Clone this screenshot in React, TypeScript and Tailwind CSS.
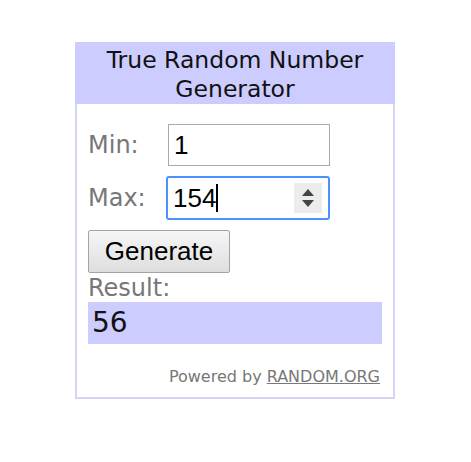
export default function App() {
  return (
    <div className="w-[471px] h-[462px] bg-white pt-[42px] pl-[75px]">
      <div className="w-[320px] h-[357px] border-2 border-[#d4d4f7] flex flex-col font-['DejaVu_Sans',sans-serif]">
        <div className="bg-[#ccccff] -mx-[2px] -mt-[2px] h-[62px] pt-[3px] flex items-center justify-center text-center text-[23.5px] leading-[29px] text-[#111]">
          True Random Number
          <br />
          Generator
        </div>
        <div className="px-[11px] pt-[20px]">
          <div className="flex items-center h-[42px]">
            <span className="w-[80px] text-[24px] text-[#777]">Min:</span>
            <div className="w-[162px] h-[42px] border border-[#aaa] flex items-center pl-[5px] text-[26px] text-black font-['Liberation_Sans',sans-serif]">
              1
            </div>
          </div>
          <div className="flex items-center h-[44px] mt-[10px]">
            <span className="w-[78px] text-[24px] text-[#777]">Max:</span>
            <div className="w-[164px] h-[44px] border-2 border-[#4d90fe] rounded-[3px] flex items-center pl-[5px] pr-[6px] text-[26px] text-black font-['Liberation_Sans',sans-serif]">
              <span>154</span>
              <span className="w-[2px] h-[28px] bg-black" />
              <div className="ml-auto w-[28px] h-[30px] bg-[#ececec] flex flex-col items-center justify-center gap-[4px]">
                <svg width="12" height="7" viewBox="0 0 12 7">
                  <path d="M6 0 L12 7 L0 7 Z" fill="#444" />
                </svg>
                <svg width="12" height="7" viewBox="0 0 12 7">
                  <path d="M0 0 L12 0 L6 7 Z" fill="#444" />
                </svg>
              </div>
            </div>
          </div>
          <button className="mt-[10px] w-[142px] h-[43px] border border-[#a3a3a3] rounded-[2px] bg-gradient-to-b from-[#f6f6f6] to-[#dedede] text-[26px] text-black font-['Liberation_Sans',sans-serif]">
            Generate
          </button>
          <div className="text-[24px] leading-[28px] text-[#777] mt-[1px]">Result:</div>
          <div className="h-[42px] bg-[#ccccff] flex items-center pl-[4px] text-[28px] text-[#111]">56</div>
          <div className="mt-[21px] text-right pr-[2px] text-[16px] text-[#777]">
            Powered by <span className="underline">RANDOM.ORG</span>
          </div>
        </div>
      </div>
    </div>
  );
}
